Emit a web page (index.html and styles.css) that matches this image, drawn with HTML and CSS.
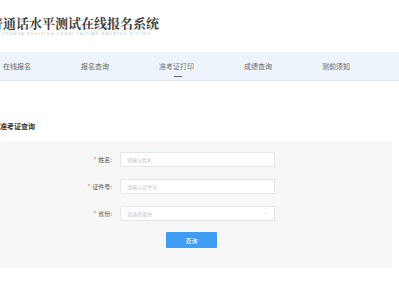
FILE: index.html
```html
<!DOCTYPE html>
<html lang="zh-CN">
<head>
    <meta charset="UTF-8">
    <meta name="viewport" content="width=device-width, initial-scale=1.0">
    <title>普通话水平测试在线报名系统</title>
    <link rel="stylesheet" href="styles.css">
</head>
<body>
    <header class="header">
        <div class="brand">
            <div class="brand-title">普通话水平测试在线报名系统</div>
            <div class="brand-sub">PUTONGHUA SHUIPING CESHI ZAIXIAN BAOMING XITONG</div>
        </div>
    </header>

    <nav class="nav">
        <a class="nav-item">在线报名</a>
        <a class="nav-item">报名查询</a>
        <a class="nav-item active">准考证打印</a>
        <a class="nav-item">成绩查询</a>
        <a class="nav-item">测前须知</a>
        <a class="nav-item user">登录</a>
    </nav>

    <main class="main">
        <h2 class="section-title">准考证查询</h2>
        <div class="panel">
            <form class="query-form">
                <div class="form-row">
                    <label class="form-label"><span class="req">*</span>姓名:</label>
                    <input class="form-input" type="text" placeholder="请输入姓名">
                </div>
                <div class="form-row">
                    <label class="form-label"><span class="req">*</span>证件号:</label>
                    <input class="form-input" type="text" placeholder="请输入证件号">
                </div>
                <div class="form-row">
                    <label class="form-label"><span class="req">*</span>省份:</label>
                    <div class="form-input select">
                        <span class="placeholder">请选择省份</span>
                        <span class="arrow">&#8964;</span>
                    </div>
                </div>
                <div class="form-actions">
                    <button type="button" class="btn-query">查询</button>
                </div>
            </form>
        </div>
    </main>
</body>
</html>
```

FILE: styles.css
```css
body {
    margin: 0;
    font-family: "Noto Sans CJK SC", "Noto Sans", sans-serif;
    background-color: #fff;
    color: #333;
    overflow: hidden;
}

/* 顶部标题 */
.header {
    height: 52px;
    overflow: hidden;
}

.brand {
    margin-left: -10px;
    padding-top: 14px;
    width: 180px;
}

.brand-title {
    font-family: "Noto Serif CJK SC", "Noto Sans CJK SC", serif;
    font-size: 13px;
    font-weight: 700;
    line-height: 17px;
    color: #3c3c3c;
    letter-spacing: 0;
}

.brand-sub {
    font-family: "Liberation Sans", sans-serif;
    font-size: 4px;
    line-height: 5px;
    color: #c4c8cc;
    letter-spacing: 1.05px;
    white-space: nowrap;
}

/* 导航 */
.nav {
    height: 28px;
    background-color: #eef4fb;
    border-bottom: 1px solid #dfe5ec;
    display: flex;
    align-items: center;
    gap: 50px;
    padding-left: 3px;
    white-space: nowrap;
    overflow: hidden;
}

.nav-item {
    position: relative;
    font-size: 7px;
    color: #666;
    line-height: 10px;
}

.nav-item.active {
    color: #777;
}

.nav-item.active::after {
    content: "";
    position: absolute;
    left: 50%;
    bottom: -6px;
    width: 8px;
    height: 1.5px;
    margin-left: -3px;
    background-color: #666;
}

.nav-item.user {
    color: #222;
}

/* 主体 */
.main {
    padding-top: 40px;
}

.section-title {
    margin: 0 0 10px 0;
    font-size: 7px;
    line-height: 10px;
    font-weight: 700;
    color: #333;
}

.panel {
    width: 392px;
    background-color: #f7f7f7;
    padding: 11px 0 20px 0;
}

.query-form {
    display: flex;
    flex-direction: column;
    gap: 12px;
}

.form-row {
    display: flex;
    align-items: center;
    gap: 8px;
}

.form-label {
    width: 112px;
    text-align: right;
    font-size: 6px;
    color: #555;
}

.req {
    color: #f56c6c;
    margin-right: 2px;
}

.form-input {
    box-sizing: border-box;
    width: 155px;
    height: 15px;
    border: 1px solid #e4e6ea;
    border-radius: 1px;
    background-color: #fff;
    padding: 0 6px;
    font-family: inherit;
    font-size: 5px;
    outline: none;
}

.form-input::placeholder {
    color: #c0c4cc;
}

.select {
    display: flex;
    align-items: center;
    justify-content: space-between;
}

.select .placeholder {
    color: #c0c4cc;
}

.select .arrow {
    color: #c0c4cc;
    font-size: 6px;
    line-height: 6px;
    margin-top: -3px;
}

.form-actions {
    display: flex;
    padding-left: 166px;
    margin-top: -1px;
}

.btn-query {
    width: 51px;
    height: 16px;
    border: none;
    border-radius: 1px;
    background-color: #419cf3;
    color: #fff;
    font-family: inherit;
    font-size: 6px;
    padding: 0;
}
```
